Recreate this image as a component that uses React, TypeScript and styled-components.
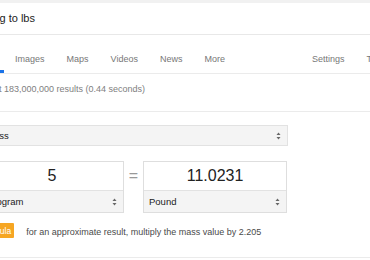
import React from "react";
import styled, { createGlobalStyle } from "styled-components";

const GlobalStyle = createGlobalStyle`
  html, body { margin: 0; padding: 0; background: #fff; }
  body { font-family: "Liberation Sans", Arial, sans-serif; }
  * { box-sizing: border-box; }
`;

const Page = styled.div`
  width: 370px;
  height: 260px;
  overflow: hidden;
  background: #fff;
`;

const SearchBar = styled.div`
  height: 35px;
  border-top: 3px solid #f1f1f1;
  border-bottom: 1px solid #e8e8e8;
  display: flex;
  align-items: center;
  padding-bottom: 1px;
`;

const Query = styled.span`
  margin-left: -6px;
  font-size: 11px;
  color: #222;
  white-space: nowrap;
`;

const TabRow = styled.nav`
  display: flex;
  height: 39px;
  border-bottom: 1px solid #ebebeb;
  margin-left: -28px;
`;

const Tab = styled.div<{ $active?: boolean; $push?: number }>`
  height: 38px;
  padding: 19px 11px 0;
  margin-left: ${(p) => p.$push ?? 0}px;
  font-size: 9px;
  line-height: 10px;
  color: ${(p) => (p.$active ? "#1a73e8" : "#777")};
  border-bottom: 3px solid ${(p) => (p.$active ? "#1a73e8" : "transparent")};
  white-space: nowrap;
`;

const Stats = styled.div`
  height: 37px;
  padding-top: 10px;
  margin-left: -22px;
  font-size: 9px;
  line-height: 11px;
  color: #808080;
  white-space: nowrap;
`;

const Divider = styled.div`
  height: 1px;
  background: #ebebeb;
`;

const Converter = styled.section`
  margin-left: -20px;
  width: 308px;
  padding-top: 13px;
  height: 145px;
`;

const SelectBox = styled.div<{ $h: number; $inset?: boolean }>`
  height: ${(p) => p.$h}px;
  display: flex;
  align-items: center;
  justify-content: space-between;
  padding: 0 6px 0 5px;
  background: #f4f4f4;
  border: ${(p) => (p.$inset ? "0" : "1px solid #e2e2e2")};
  border-top: 1px solid #e2e2e2;
  font-size: 9.5px;
  color: #222;
`;

const Arrows = () => (
  <svg width="5" height="8" viewBox="0 0 5 8">
    <path d="M2.5 0.5 L4.5 3 L0.5 3 Z" fill="#666" />
    <path d="M2.5 7.5 L4.5 5 L0.5 5 Z" fill="#666" />
  </svg>
);

const InputRow = styled.div`
  display: flex;
  margin-top: 15px;
`;

const Panel = styled.div`
  width: 144px;
  border: 1px solid #dedede;
  display: flex;
  flex-direction: column;
`;

const NumberField = styled.div`
  height: 28px;
  display: flex;
  align-items: center;
  justify-content: center;
  font-size: 16px;
  color: #222;
  background: #fff;
`;

const Equals = styled.div`
  width: 19px;
  display: flex;
  justify-content: center;
  padding-top: 6px;
  font-size: 16px;
  color: #999;
`;

const FormulaRow = styled.div`
  display: flex;
  align-items: center;
  margin-top: 10px;
  margin-left: -3px;
`;

const Badge = styled.span`
  height: 15px;
  padding: 0 3px;
  display: flex;
  align-items: center;
  background: #f6a623;
  color: #fff;
  font-size: 8.5px;
  border-radius: 1px;
`;

const FormulaText = styled.span`
  margin-left: 12px;
  font-size: 9px;
  color: #4a4a4a;
  white-space: nowrap;
  padding-top: 2px;
`;

const units = ["Kilogram", "Pound"];

export default function App() {
  return (
    <Page>
      <GlobalStyle />
      <SearchBar>
        <Query>kg to lbs</Query>
      </SearchBar>
      <TabRow>
        <Tab $active>All</Tab>
        <Tab>Images</Tab>
        <Tab>Maps</Tab>
        <Tab>Videos</Tab>
        <Tab>News</Tab>
        <Tab>More</Tab>
        <Tab $push={65}>Settings</Tab>
        <Tab>Tools</Tab>
      </TabRow>
      <Stats>About 183,000,000 results (0.44 seconds)</Stats>
      <Divider />
      <Converter>
        <SelectBox $h={21}>
          <span>Mass</span>
          <Arrows />
        </SelectBox>
        <InputRow>
          <Panel>
            <NumberField>5</NumberField>
            <SelectBox $h={22} $inset>
              <span>{units[0]}</span>
              <Arrows />
            </SelectBox>
          </Panel>
          <Equals>=</Equals>
          <Panel>
            <NumberField>11.0231</NumberField>
            <SelectBox $h={22} $inset>
              <span>{units[1]}</span>
              <Arrows />
            </SelectBox>
          </Panel>
        </InputRow>
        <FormulaRow>
          <Badge>Formula</Badge>
          <FormulaText>for an approximate result, multiply the mass value by 2.205</FormulaText>
        </FormulaRow>
      </Converter>
      <Divider />
    </Page>
  );
}
